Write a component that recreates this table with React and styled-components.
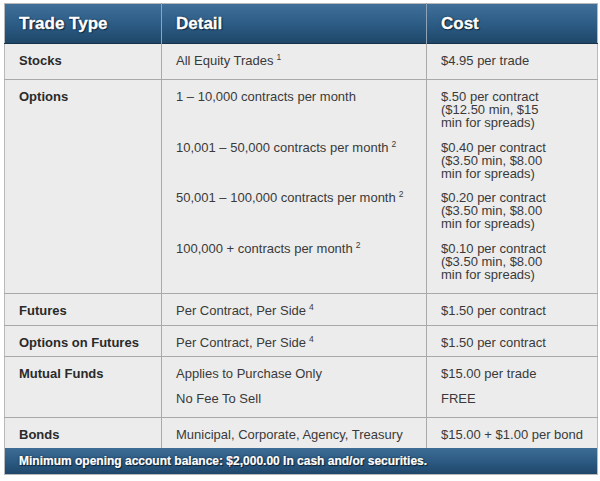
import React from "react";
import styled, { createGlobalStyle } from "styled-components";

const Global = createGlobalStyle`
  html, body { margin: 0; padding: 0; background: #ffffff; }
  body { font-family: "Liberation Sans", Arial, Helvetica, sans-serif; }
`;

const Page = styled.div`
  padding: 3px 3px 0 4px;
`;

const Table = styled.table`
  width: 593px;
  border-collapse: collapse;
  table-layout: fixed;
  border: 1px solid #b9b9b9;
  background: #ececec;
  color: #333333;
  font-size: 13px;
`;

const Col = styled.col`
  width: ${(p) => p.$w}px;
`;

const HeadRow = styled.tr`
  background: linear-gradient(to bottom, #40709a 0%, #2b5a83 55%, #1f4769 100%);
  border-bottom: 1px solid #15324b;
`;

const HeadCell = styled.th`
  height: 39px;
  padding: 0 14px;
  text-align: left;
  vertical-align: middle;
  font-size: 17px;
  font-weight: bold;
  color: #ffffff;
  text-shadow: 0 0 2px #0b1f33, 1px 1px 1px #0b1f33, 0 0 1px #0b1f33;
  -webkit-text-stroke: 0.3px #ffffff;
  border-left: 1px solid #8fa3b5;
  &:first-child { border-left: none; }
`;

const Row = styled.tr`
  border-top: 1px solid #a9a9a9;
`;

const Cell = styled.td`
  padding: 10px 6px ${(p) => p.$pb ?? 8}px 14px;
  vertical-align: top;
  line-height: 13px;
  border-left: 1px solid #a9a9a9;
  font-weight: ${(p) => (p.$bold ? "bold" : "normal")};
  color: ${(p) => (p.$bold ? "#2a2a2a" : "#3a3a3a")};
  white-space: nowrap;
  &:first-child { border-left: none; }
`;

const Stack = styled.div`
  display: flex;
  flex-direction: column;
  gap: ${(p) => p.$gap}px;
`;

const Group = styled.div`
  height: ${(p) => p.$h ?? 13}px;
  line-height: 13px;
`;

const Sup = styled.sup`
  font-size: 8.5px;
  line-height: 0;
  vertical-align: 5px;
  margin-left: 3px;
`;

const FootRow = styled.tr`
  background: linear-gradient(to bottom, #3d6c95 0%, #2a5880 55%, #1f4668 100%);
`;

const FootCell = styled.td`
  height: 26px;
  padding: 0 14px;
  vertical-align: middle;
  font-size: 12px;
  font-weight: bold;
  color: #ffffff;
  text-shadow: 0 0 2px #0b1f33, 1px 1px 1px #0b1f33;
  -webkit-text-stroke: 0.2px #ffffff;
`;

const optionTiers = [
  { detail: "1 – 10,000 contracts per month", sup: null, cost: ["$.50 per contract", "($12.50 min, $15", "min for spreads)"] },
  { detail: "10,001 – 50,000 contracts per month", sup: "2", cost: ["$0.40 per contract", "($3.50 min, $8.00", "min for spreads)"] },
  { detail: "50,001 – 100,000 contracts per month", sup: "2", cost: ["$0.20 per contract", "($3.50 min, $8.00", "min for spreads)"] },
  { detail: "100,000 + contracts per month", sup: "2", cost: ["$0.10 per contract", "($3.50 min, $8.00", "min for spreads)"] },
];

export default function App() {
  return (
    <>
      <Global />
      <Page>
        <Table>
          <colgroup>
            <Col $w={157} />
            <Col $w={265} />
            <Col $w={171} />
          </colgroup>
          <thead>
            <HeadRow>
              <HeadCell>Trade Type</HeadCell>
              <HeadCell>Detail</HeadCell>
              <HeadCell>Cost</HeadCell>
            </HeadRow>
          </thead>
          <tbody>
            <Row>
              <Cell $bold $pb={12}>Stocks</Cell>
              <Cell $pb={12}>All Equity Trades<Sup>1</Sup></Cell>
              <Cell $pb={12}>$4.95 per trade</Cell>
            </Row>
            <Row>
              <Cell $bold $pb={12}>Options</Cell>
              <Cell $pb={12}>
                <Stack $gap={11.5}>
                  {optionTiers.map((t) => (
                    <Group key={t.detail} $h={39}>
                      {t.detail}
                      {t.sup && <Sup>{t.sup}</Sup>}
                    </Group>
                  ))}
                </Stack>
              </Cell>
              <Cell $pb={12}>
                <Stack $gap={11.5}>
                  {optionTiers.map((t) => (
                    <Group key={t.detail} $h={39}>
                      {t.cost.map((l) => (
                        <div key={l}>{l}</div>
                      ))}
                    </Group>
                  ))}
                </Stack>
              </Cell>
            </Row>
            <Row>
              <Cell $bold $pb={8}>Futures</Cell>
              <Cell $pb={8}>Per Contract, Per Side<Sup>4</Sup></Cell>
              <Cell $pb={8}>$1.50 per contract</Cell>
            </Row>
            <Row>
              <Cell $bold $pb={7}>Options on Futures</Cell>
              <Cell $pb={7}>Per Contract, Per Side<Sup>4</Sup></Cell>
              <Cell $pb={7}>$1.50 per contract</Cell>
            </Row>
            <Row>
              <Cell $bold $pb={12}>Mutual Funds</Cell>
              <Cell $pb={12}>
                <Stack $gap={12}>
                  <Group>Applies to Purchase Only</Group>
                  <Group>No Fee To Sell</Group>
                </Stack>
              </Cell>
              <Cell $pb={12}>
                <Stack $gap={12}>
                  <Group>$15.00 per trade</Group>
                  <Group>FREE</Group>
                </Stack>
              </Cell>
            </Row>
            <Row>
              <Cell $bold $pb={7}>Bonds</Cell>
              <Cell $pb={7}>Municipal, Corporate, Agency, Treasury</Cell>
              <Cell $pb={7}>$15.00 + $1.00 per bond</Cell>
            </Row>
          </tbody>
          <tfoot>
            <FootRow>
              <FootCell colSpan={3}>
                Minimum opening account balance: $2,000.00 In cash and/or securities.
              </FootCell>
            </FootRow>
          </tfoot>
        </Table>
      </Page>
    </>
  );
}
